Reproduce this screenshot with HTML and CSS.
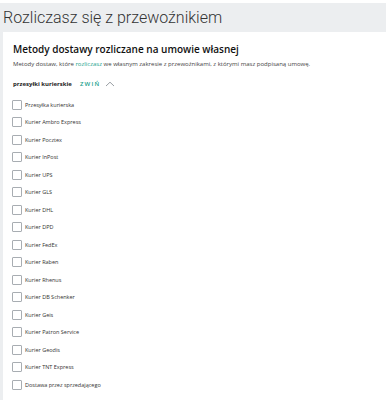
FILE: index.html
```html
<!DOCTYPE html>
<html lang="pl">
<head>
  <meta charset="UTF-8" />
  <meta name="viewport" content="width=device-width, initial-scale=1.0"/>
  <title>Rozliczasz się z przewoźnikiem</title>
  <link rel="stylesheet" href="styles.css">
</head>
<body>

  <div class="topbar"></div>

  <div class="page">
    <h1 class="page-title">Rozliczasz się z przewoźnikiem</h1>

    <div class="card">
      <h2>Metody dostawy rozliczane na umowie własnej</h2>
      <p class="desc">Metody dostaw, które <a href="#">rozliczasz</a> we własnym zakresie z przewoźnikami, z którymi masz podpisaną umowę.</p>

      <div class="group-head">
        <span class="group-name">przesyłki kurierskie</span>
        <button class="toggle">ZWIŃ</button>
        <svg class="chevron" width="10" height="6" viewBox="0 0 10 6">
          <path d="M1 5 L5 1.2 L9 5" fill="none" stroke="#9a9fa4" stroke-width="1"/>
        </svg>
      </div>

      <ul class="methods">
        <li><label><input type="checkbox"><span>Przesyłka kurierska</span></label></li>
        <li><label><input type="checkbox"><span>Kurier Ambro Express</span></label></li>
        <li><label><input type="checkbox"><span>Kurier Pocztex</span></label></li>
        <li><label><input type="checkbox"><span>Kurier InPost</span></label></li>
        <li><label><input type="checkbox"><span>Kurier UPS</span></label></li>
        <li><label><input type="checkbox"><span>Kurier GLS</span></label></li>
        <li><label><input type="checkbox"><span>Kurier DHL</span></label></li>
        <li><label><input type="checkbox"><span>Kurier DPD</span></label></li>
        <li><label><input type="checkbox"><span>Kurier FedEx</span></label></li>
        <li><label><input type="checkbox"><span>Kurier Raben</span></label></li>
        <li><label><input type="checkbox"><span>Kurier Rhenus</span></label></li>
        <li><label><input type="checkbox"><span>Kurier DB Schenker</span></label></li>
        <li><label><input type="checkbox"><span>Kurier Geis</span></label></li>
        <li><label><input type="checkbox"><span>Kurier Patron Service</span></label></li>
        <li><label><input type="checkbox"><span>Kurier Geodis</span></label></li>
        <li><label><input type="checkbox"><span>Kurier TNT Express</span></label></li>
        <li><label><input type="checkbox"><span>Dostawa przez sprzedającego</span></label></li>
      </ul>
    </div>
  </div>

</body>
</html>
```

FILE: styles.css
```css
body {
  margin: 0;
  background: #eceef0;
  font-family: 'Open Sans', sans-serif;
  color: #222;
  height: 400px;
  overflow: hidden;
}

.topbar {
  height: 3px;
  background: #fff;
}

.page {
  padding-left: 3px;
}

.page-title {
  margin: 0;
  height: 29px;
  line-height: 29px;
  font-family: Roboto, sans-serif;
  font-weight: 300;
  font-size: 16px;
  color: #333;
}

.card {
  background: #fff;
  padding: 10px;
  height: 368px;
  box-sizing: border-box;
}

h2 {
  margin: 0;
  font-size: 10px;
  font-weight: 600;
  line-height: 15px;
  color: #111;
}

.desc {
  margin: 3px 0 0;
  font-size: 6px;
  line-height: 8px;
  color: #444;
}

.desc a {
  color: #1a9f8c;
  text-decoration: none;
}

.group-head {
  display: flex;
  align-items: center;
  margin-top: 10px;
  height: 12px;
}

.group-name {
  font-size: 6px;
  font-weight: 700;
  color: #222;
}

.toggle {
  background: none;
  border: none;
  padding: 0;
  margin-left: 8px;
  font-family: 'Open Sans', sans-serif;
  font-size: 6px;
  font-weight: 600;
  letter-spacing: 1.2px;
  color: #1a9f8c;
  cursor: pointer;
}

.chevron {
  margin-left: 5px;
}

.methods {
  list-style: none;
  margin: 6px 0 0;
  padding: 0;
}

.methods li {
  height: 17.5px;
  display: flex;
  align-items: center;
}

.methods label {
  display: flex;
  align-items: center;
  gap: 3px;
  font-size: 5.5px;
  color: #333;
}

.methods input {
  appearance: none;
  margin: 0 0 0 -1px;
  width: 10px;
  height: 10px;
  border: 1px solid #a8adb2;
  border-radius: 1px;
  background: #fff;
}
```
